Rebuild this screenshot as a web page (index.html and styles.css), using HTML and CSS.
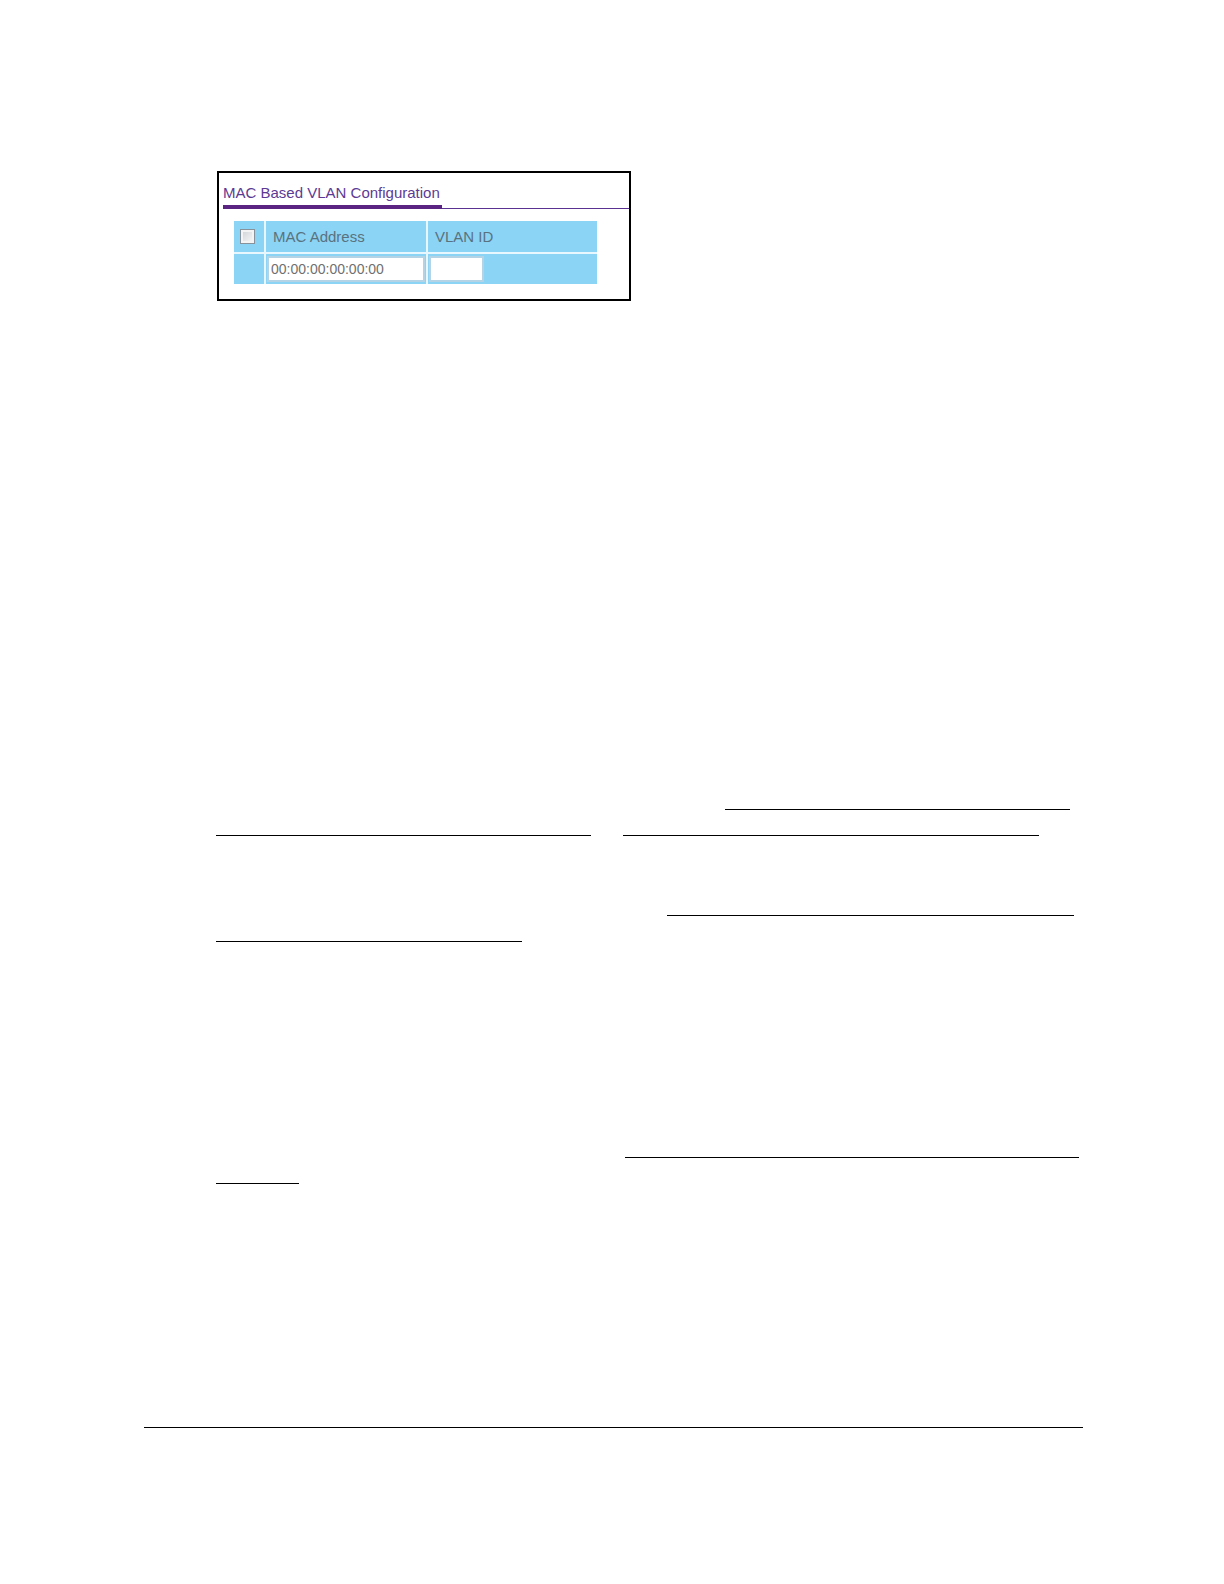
FILE: index.html
```html
<!DOCTYPE html>
<html lang="en">
<head>
<meta charset="utf-8">
<title>MAC Based VLAN Configuration</title>
<link rel="stylesheet" href="styles.css">
</head>
<body>
<main class="page">
  <article class="content">
    <section class="panel">
      <header class="panel-head">
        <h1 class="panel-title">MAC Based VLAN Configuration</h1>
      </header>
      <table class="vlan-table">
        <thead>
          <tr>
            <th class="col-check"><input type="checkbox" class="check" aria-label="Select all"></th>
            <th class="col-mac" id="mac-label">MAC Address</th>
            <th class="col-vlan" id="vlan-label">VLAN ID</th>
          </tr>
        </thead>
        <tbody>
          <tr>
            <td></td>
            <td><input type="text" class="field field-mac" value="00:00:00:00:00:00" aria-labelledby="mac-label"></td>
            <td><input type="text" class="field field-vlan" aria-labelledby="vlan-label"></td>
          </tr>
        </tbody>
      </table>
    </section>

    <div class="rules rules-first">
      <div class="row row-a"><span class="line"></span></div>
      <div class="row row-b"><span class="line"></span><span class="line"></span></div>
    </div>
    <div class="rules rules-second">
      <div class="row row-c"><span class="line"></span></div>
      <div class="row row-d"><span class="line"></span></div>
    </div>
    <div class="rules rules-third">
      <div class="row row-e"><span class="line"></span></div>
      <div class="row row-f"><span class="line"></span></div>
    </div>
  </article>
  <hr class="footer-rule">
</main>
</body>
</html>
```
FILE: styles.css
```css
* {
  box-sizing: border-box;
}

body {
  margin: 0;
  background: #fff;
  font-family: "Liberation Sans", Arial, sans-serif;
}

.page {
  padding: 171px 141px 156px 144px;
}

.content {
  padding: 0 4px 0 72px;
}

/* Configuration panel */
.panel {
  width: 48%;
  min-width: 414px;
  margin-left: 1px;
  padding: 8px 0 15px;
  border: 2px solid #000;
}

.panel-head {
  display: flex;
  height: 28px;
  margin: 0 0 12px 4px;
  border-bottom: 1px solid #5a3090;
}

.panel-title {
  height: 28px;
  margin: 0;
  padding-right: 2px;
  border-bottom: 4px solid #5b2482;
  color: #5c3a94;
  font-size: 15px;
  font-weight: 400;
  line-height: 24px;
  white-space: nowrap;
}

.vlan-table {
  width: calc(100% - 47px);
  margin: 0 32px 0 15px;
  border-collapse: collapse;
  table-layout: fixed;
}

.vlan-table th,
.vlan-table td {
  height: 31px;
  padding: 0;
  background: #8bd4f5;
  color: #5a727e;
  font-size: 15px;
  font-weight: 400;
  line-height: 20px;
  text-align: left;
}

.vlan-table th {
  height: 32px;
  padding-left: 7px;
}

.vlan-table tr > * + * {
  border-left: 2px solid #e8f7fe;
}

.vlan-table td {
  border-top: 2px solid #e8f7fe;
}

.vlan-table .col-check {
  width: 31px;
  padding-left: 6px;
}

.col-mac {
  width: 162px;
}

.check {
  display: block;
  appearance: none;
  width: 15px;
  height: 15px;
  margin: 0;
  border: 1px solid #87929a;
  background: linear-gradient(135deg, #cdd1d5, #fafafa);
  box-shadow: inset 0 0 0 2px #f4f4f4;
}

.check:checked {
  background: #5b2482;
}

.field {
  display: block;
  height: 26px;
  margin: 0 1px;
  padding: 0 2px;
  border: 2px solid #b4d3e4;
  background: #fff;
  color: #707070;
  font-family: inherit;
  font-size: 14px;
}

.field-mac {
  width: calc(100% - 2px);
}

.field-vlan {
  width: 55px;
}

/* Ruled lines: columns are shares of the text width */
.rules {
  display: grid;
  row-gap: 25px;
}

.rules-first {
  margin-top: 508px;
}

.rules-second {
  margin-top: 79px;
}

.rules-third {
  margin-top: 215px;
}

.row {
  display: grid;
}

.line {
  height: 1px;
  background: #000;
}

.row-a {
  grid-template-columns: 509fr 345fr 9fr;
}

.row-b {
  grid-template-columns: 375fr 416fr;
  column-gap: 32px;
  padding-right: 40px;
}

.row-c {
  grid-template-columns: 451fr 407fr 5fr;
}

.row-d {
  grid-template-columns: 306fr 557fr;
}

.row-e {
  grid-template-columns: 409fr 454fr;
}

.row-f {
  grid-template-columns: 83fr 780fr;
}

.row-a .line,
.row-c .line,
.row-e .line {
  grid-column: 2;
}

.footer-rule {
  height: 1px;
  margin: 243px 0 0;
  border: 0;
  background: #000;
}
```
